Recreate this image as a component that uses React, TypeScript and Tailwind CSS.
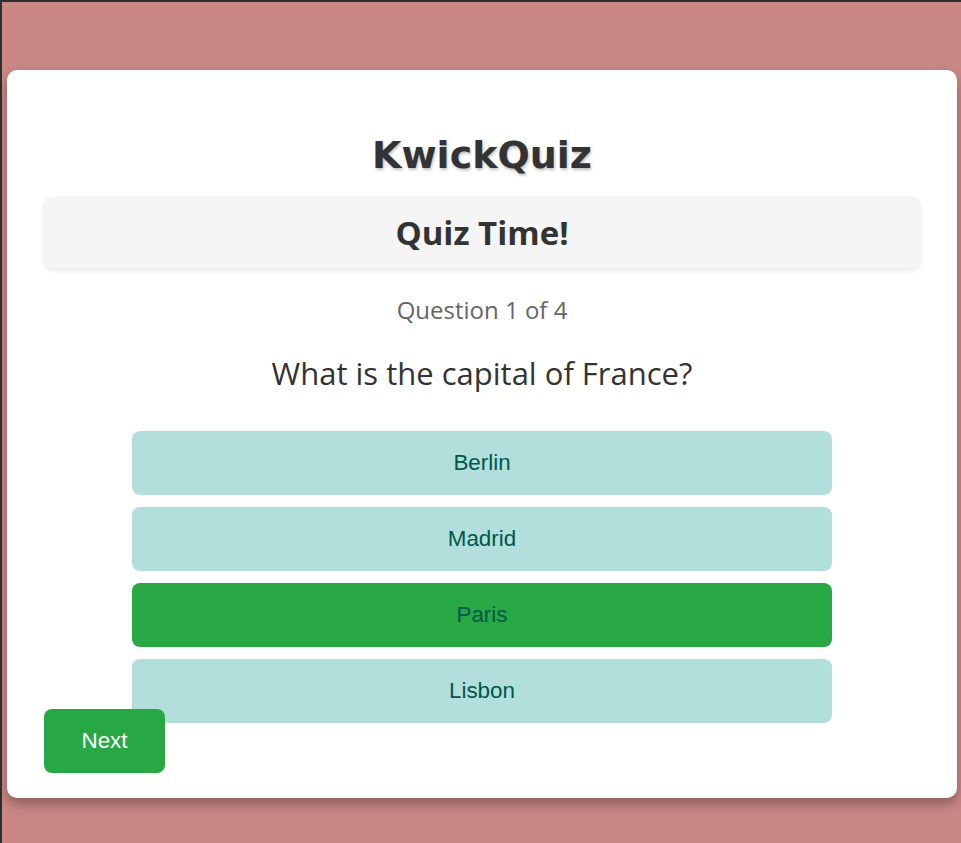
import React, { useState } from "react";

const options = ["Berlin", "Madrid", "Paris", "Lisbon"];

export default function App() {
  const [selected, setSelected] = useState<string>("Paris");

  return (
    <div className="min-h-[843px] bg-[#c98785] border-t-2 border-l-2 border-[#2f2f2f] pt-[68px] pl-[5px] pr-[4px] pb-[45px]">
      <div className="relative bg-white rounded-[10px] shadow-[0_6px_12px_rgba(0,0,0,0.3)] px-[37px] pt-[57px] pb-[75px] h-[728px]">
        <h1 className="text-center text-[#333] text-[38px] font-bold leading-[56px] font-['DejaVu_Sans',sans-serif] [text-shadow:1px_2px_3px_rgba(0,0,0,0.25)]">
          KwickQuiz
        </h1>
        <div className="mt-[14px] h-[71px] bg-[#f5f5f5] rounded-lg shadow-[0_2px_5px_rgba(0,0,0,0.1)] flex items-center justify-center">
          <h2 className="text-[#333] text-[33px] font-bold font-['Open_Sans',sans-serif]">Quiz Time!</h2>
        </div>
        <p className="mt-[26px] text-center text-[#666] text-[24px] leading-[32px] font-['Open_Sans',sans-serif]">
          Question 1 of 4
        </p>
        <p className="mt-[27px] text-center text-[#333] text-[31px] leading-[40px] font-['Open_Sans',sans-serif]">
          What is the capital of France?
        </p>
        <div className="mt-[38px] mx-auto w-[700px] flex flex-col gap-3">
          {options.map((opt) => (
            <button
              key={opt}
              onClick={() => setSelected(opt)}
              className={
                "h-16 rounded-lg text-[22.4px] text-[#00574b] font-['Liberation_Sans',Arial,sans-serif] " +
                (selected === opt ? "bg-[#28a745]" : "bg-[#b2dfdb]")
              }
            >
              {opt}
            </button>
          ))}
        </div>
        <button className="absolute left-[37px] bottom-[25px] w-[121px] h-16 rounded-lg bg-[#28a745] text-white text-[22.4px] font-['Liberation_Sans',Arial,sans-serif]">
          Next
        </button>
      </div>
    </div>
  );
}
